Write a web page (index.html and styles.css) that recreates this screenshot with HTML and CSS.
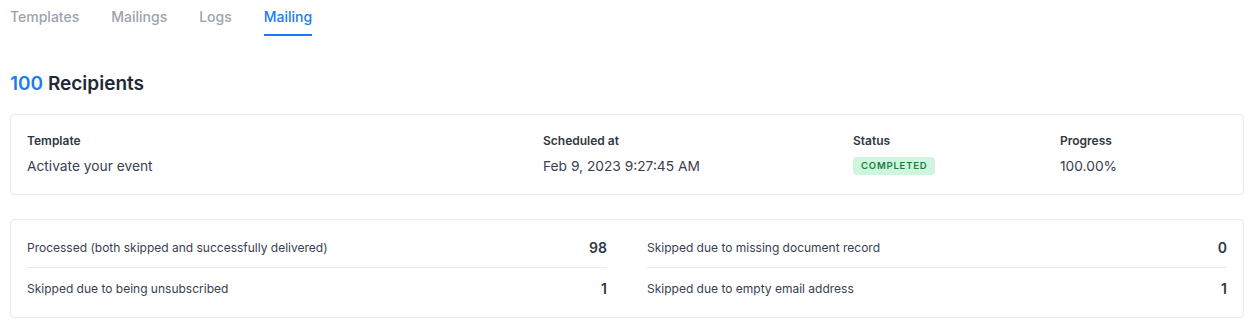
FILE: index.html
```html
<!DOCTYPE html>
<html>
<head>
<meta charset="utf-8">
<link rel="stylesheet" href="styles.css">
</head>
<body>
<nav class="tabs">
  <a class="tab">Templates</a>
  <a class="tab">Mailings</a>
  <a class="tab">Logs</a>
  <a class="tab active">Mailing</a>
</nav>
<h1 class="title"><span class="count">100</span> Recipients</h1>
<section class="card summary">
  <div class="field">
    <div class="label">Template</div>
    <div class="value">Activate your event</div>
  </div>
  <div class="field">
    <div class="label">Scheduled at</div>
    <div class="value">Feb 9, 2023 9:27:45 AM</div>
  </div>
  <div class="field">
    <div class="label">Status</div>
    <div class="value"><span class="badge">COMPLETED</span></div>
  </div>
  <div class="field">
    <div class="label">Progress</div>
    <div class="value">100.00%</div>
  </div>
</section>
<section class="card stats">
  <div class="col">
    <div class="row"><span class="stat-label">Processed (both skipped and successfully delivered)</span><span class="stat-value">98</span></div>
    <div class="row"><span class="stat-label">Skipped due to being unsubscribed</span><span class="stat-value">1</span></div>
  </div>
  <div class="col">
    <div class="row"><span class="stat-label">Skipped due to missing document record</span><span class="stat-value">0</span></div>
    <div class="row"><span class="stat-label">Skipped due to empty email address</span><span class="stat-value">1</span></div>
  </div>
</section>
</body>
</html>
```
FILE: styles.css
```css
* { box-sizing: border-box; }
html, body { margin: 0; background: #fff; }
body {
  padding: 0 12px 0 10px;
  font-family: Inter, "Noto Sans", sans-serif;
  color: #374151;
}
.tabs {
  display: flex;
  gap: 32px;
}
.tab {
  font-size: 14px;
  font-weight: 500;
  line-height: 20px;
  padding: 7px 0 7px;
  color: #9ca3af;
  border-bottom: 2px solid transparent;
}
.tab.active {
  color: #1a7cf0;
  border-bottom-color: #1a7cf0;
}
.title {
  margin: 34px 0 16px;
  font-size: 19px;
  line-height: 28px;
  font-weight: 600;
  color: #1f2937;
}
.count { color: #1a7cf0; }
.card {
  border: 1px solid #e7e9ec;
  border-radius: 4px;
  background: #fff;
}
.summary {
  display: grid;
  grid-template-columns: 516px 310px 207px 1fr;
  padding: 17px 16px 18px;
}
.label {
  font-size: 12px;
  font-weight: 600;
  line-height: 18px;
  color: #2f3742;
}
.value {
  margin-top: 6px;
  font-size: 13.75px;
  line-height: 20px;
  height: 20px;
  color: #374151;
  display: flex;
  align-items: center;
}
.badge {
  display: inline-block;
  background: #cff5de;
  color: #15803d;
  font-size: 9.5px;
  font-weight: 600;
  letter-spacing: 0.085em;
  line-height: 18px;
  padding: 0 8px;
  border-radius: 4px;
}
.stats {
  margin-top: 24px;
  display: grid;
  grid-template-columns: 1fr 1fr;
  gap: 40px;
  padding: 7px 16px 9px;
}
.row {
  display: flex;
  justify-content: space-between;
  align-items: center;
  height: 40px;
}
.row + .row { border-top: 1px solid #e5e7eb; height: 41px; }
.stat-label {
  font-size: 12px;
  color: #374151;
}
.stat-value {
  font-size: 14px;
  font-weight: 600;
  color: #2f3742;
}
```
